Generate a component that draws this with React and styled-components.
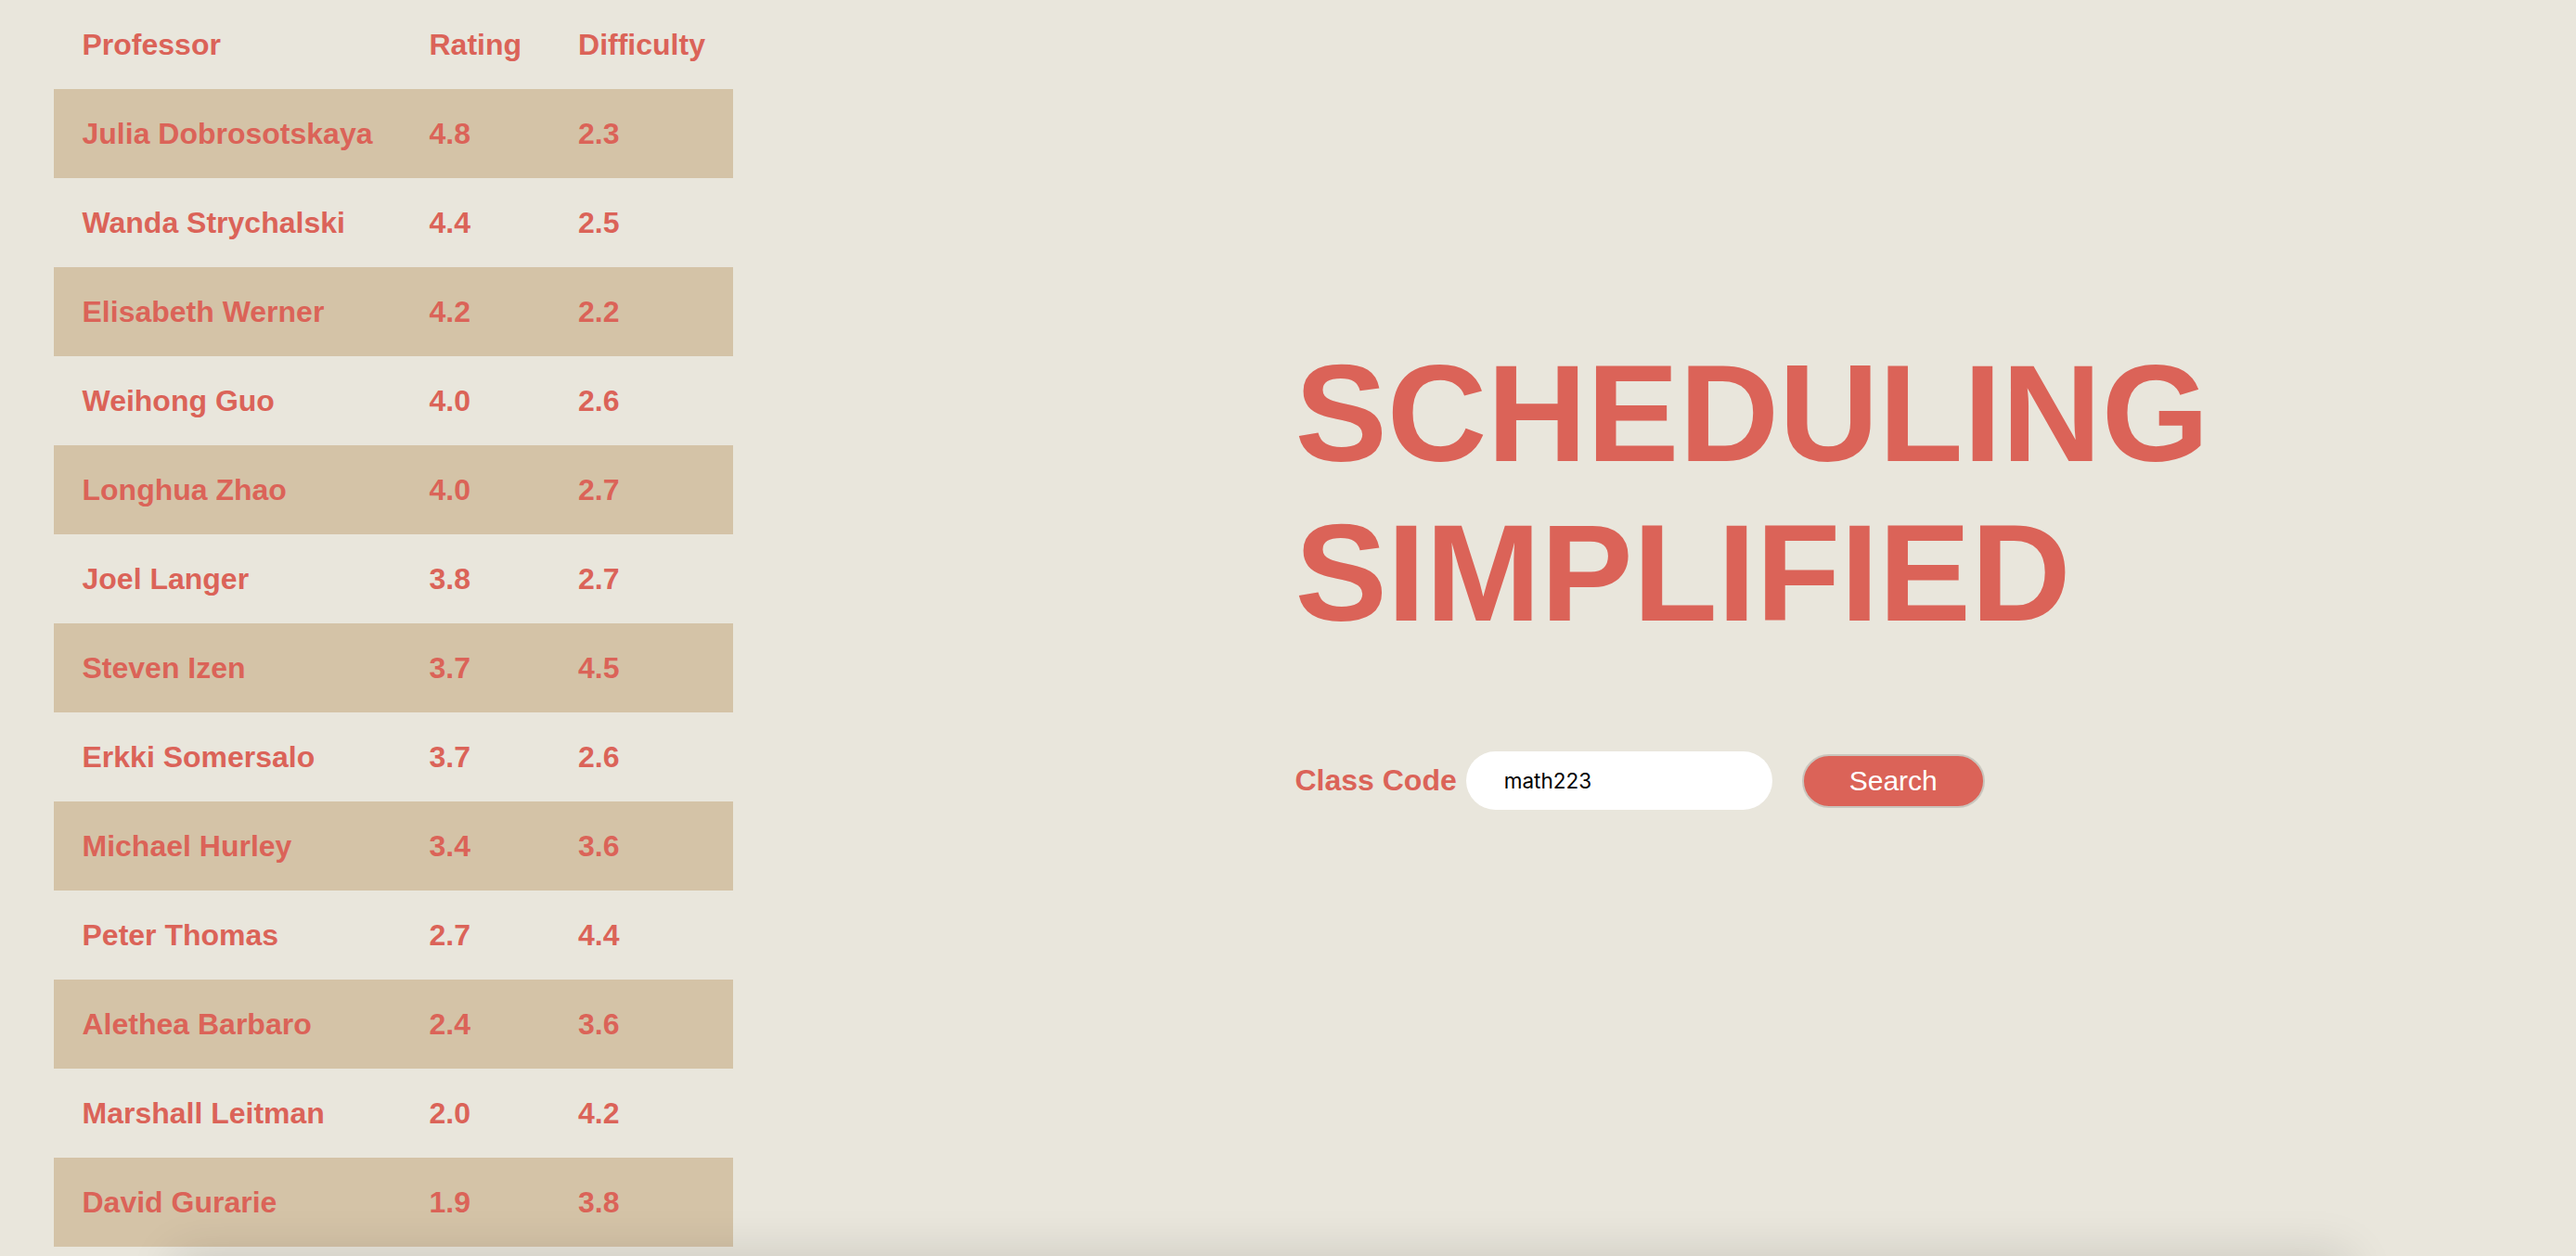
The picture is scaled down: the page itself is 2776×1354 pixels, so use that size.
import React from "react";
import styled, { createGlobalStyle } from "styled-components";

const professors = [
  { name: "Julia Dobrosotskaya", rating: "4.8", difficulty: "2.3" },
  { name: "Wanda Strychalski", rating: "4.4", difficulty: "2.5" },
  { name: "Elisabeth Werner", rating: "4.2", difficulty: "2.2" },
  { name: "Weihong Guo", rating: "4.0", difficulty: "2.6" },
  { name: "Longhua Zhao", rating: "4.0", difficulty: "2.7" },
  { name: "Joel Langer", rating: "3.8", difficulty: "2.7" },
  { name: "Steven Izen", rating: "3.7", difficulty: "4.5" },
  { name: "Erkki Somersalo", rating: "3.7", difficulty: "2.6" },
  { name: "Michael Hurley", rating: "3.4", difficulty: "3.6" },
  { name: "Peter Thomas", rating: "2.7", difficulty: "4.4" },
  { name: "Alethea Barbaro", rating: "2.4", difficulty: "3.6" },
  { name: "Marshall Leitman", rating: "2.0", difficulty: "4.2" },
  { name: "David Gurarie", rating: "1.9", difficulty: "3.8" },
];

const App = () => {
  return (
    <>
      <GlobalStyle />
      <Page>
        <Table>
          <thead>
            <tr>
              <Th>Professor</Th>
              <Th>Rating</Th>
              <Th>Difficulty</Th>
            </tr>
          </thead>
          <tbody>
            {professors.map((p, i) => (
              <Row key={p.name} $shaded={i % 2 === 0}>
                <Td>{p.name}</Td>
                <Td>{p.rating}</Td>
                <Td>{p.difficulty}</Td>
              </Row>
            ))}
          </tbody>
        </Table>
        <Hero>
          <Title>
            SCHEDULING
            <br />
            SIMPLIFIED
          </Title>
          <SearchForm onSubmit={(e) => e.preventDefault()}>
            <Label htmlFor="classCode">Class Code</Label>
            <Input id="classCode" defaultValue="math223" />
            <Button type="submit">Search</Button>
          </SearchForm>
        </Hero>
      </Page>
      <Footer />
    </>
  );
};

const GlobalStyle = createGlobalStyle`
  html, body {
    margin: 0;
    padding: 0;
    background: #e9e6dc;
    font-family: "Liberation Sans", Arial, sans-serif;
    color: #db6358;
  }
`;

const Page = styled.div`
  display: flex;
  align-items: flex-start;
  height: 1344px;
`;

const Table = styled.table`
  margin-left: 58px;
  border-collapse: collapse;
  border-spacing: 0;
  flex-shrink: 0;
`;

const Th = styled.th`
  height: 96px;
  padding: 0 30.5px;
  text-align: left;
  font-size: 32px;
  font-weight: bold;
  white-space: nowrap;
`;

const Row = styled.tr`
  background: ${(p) => (p.$shaded ? "#d4c3a7" : "transparent")};
`;

const Td = styled.td`
  height: 96px;
  padding: 0 30.5px;
  font-size: 32px;
  font-weight: bold;
  white-space: nowrap;
`;

const Hero = styled.div`
  margin-left: 605px;
  padding-top: 360px;
  display: flex;
  flex-direction: column;
`;

const Title = styled.h1`
  margin: 0;
  font-size: 149px;
  font-weight: bold;
  line-height: 172px;
  color: #db6358;
`;

const SearchForm = styled.form`
  margin-top: 106px;
  display: flex;
  align-items: center;
`;

const Label = styled.label`
  font-size: 32px;
  font-weight: bold;
  margin-right: 10px;
`;

const Input = styled.input`
  width: 330px;
  height: 63px;
  box-sizing: border-box;
  border: none;
  border-radius: 32px;
  background: #fff;
  padding: 0 0 0 41px;
  font-family: Inter, "Liberation Sans", sans-serif;
  font-size: 22.5px;
  color: #000;
  outline: none;
`;

const Button = styled.button`
  margin-left: 32px;
  width: 197px;
  height: 58px;
  box-sizing: border-box;
  border: 2px solid #c9c5bd;
  border-radius: 29px;
  background: #db6358;
  color: #fff;
  font-family: "Liberation Sans", Arial, sans-serif;
  font-size: 30px;
  cursor: pointer;
`;

const Footer = styled.div`
  position: relative;
  z-index: 2;
  margin: 10px 0 0 190px;
  width: 2340px;
  height: 300px;
  background: #e9e6dc;
  box-shadow: 0 0 50px rgba(0, 0, 0, 0.14);
`;

export default App;
